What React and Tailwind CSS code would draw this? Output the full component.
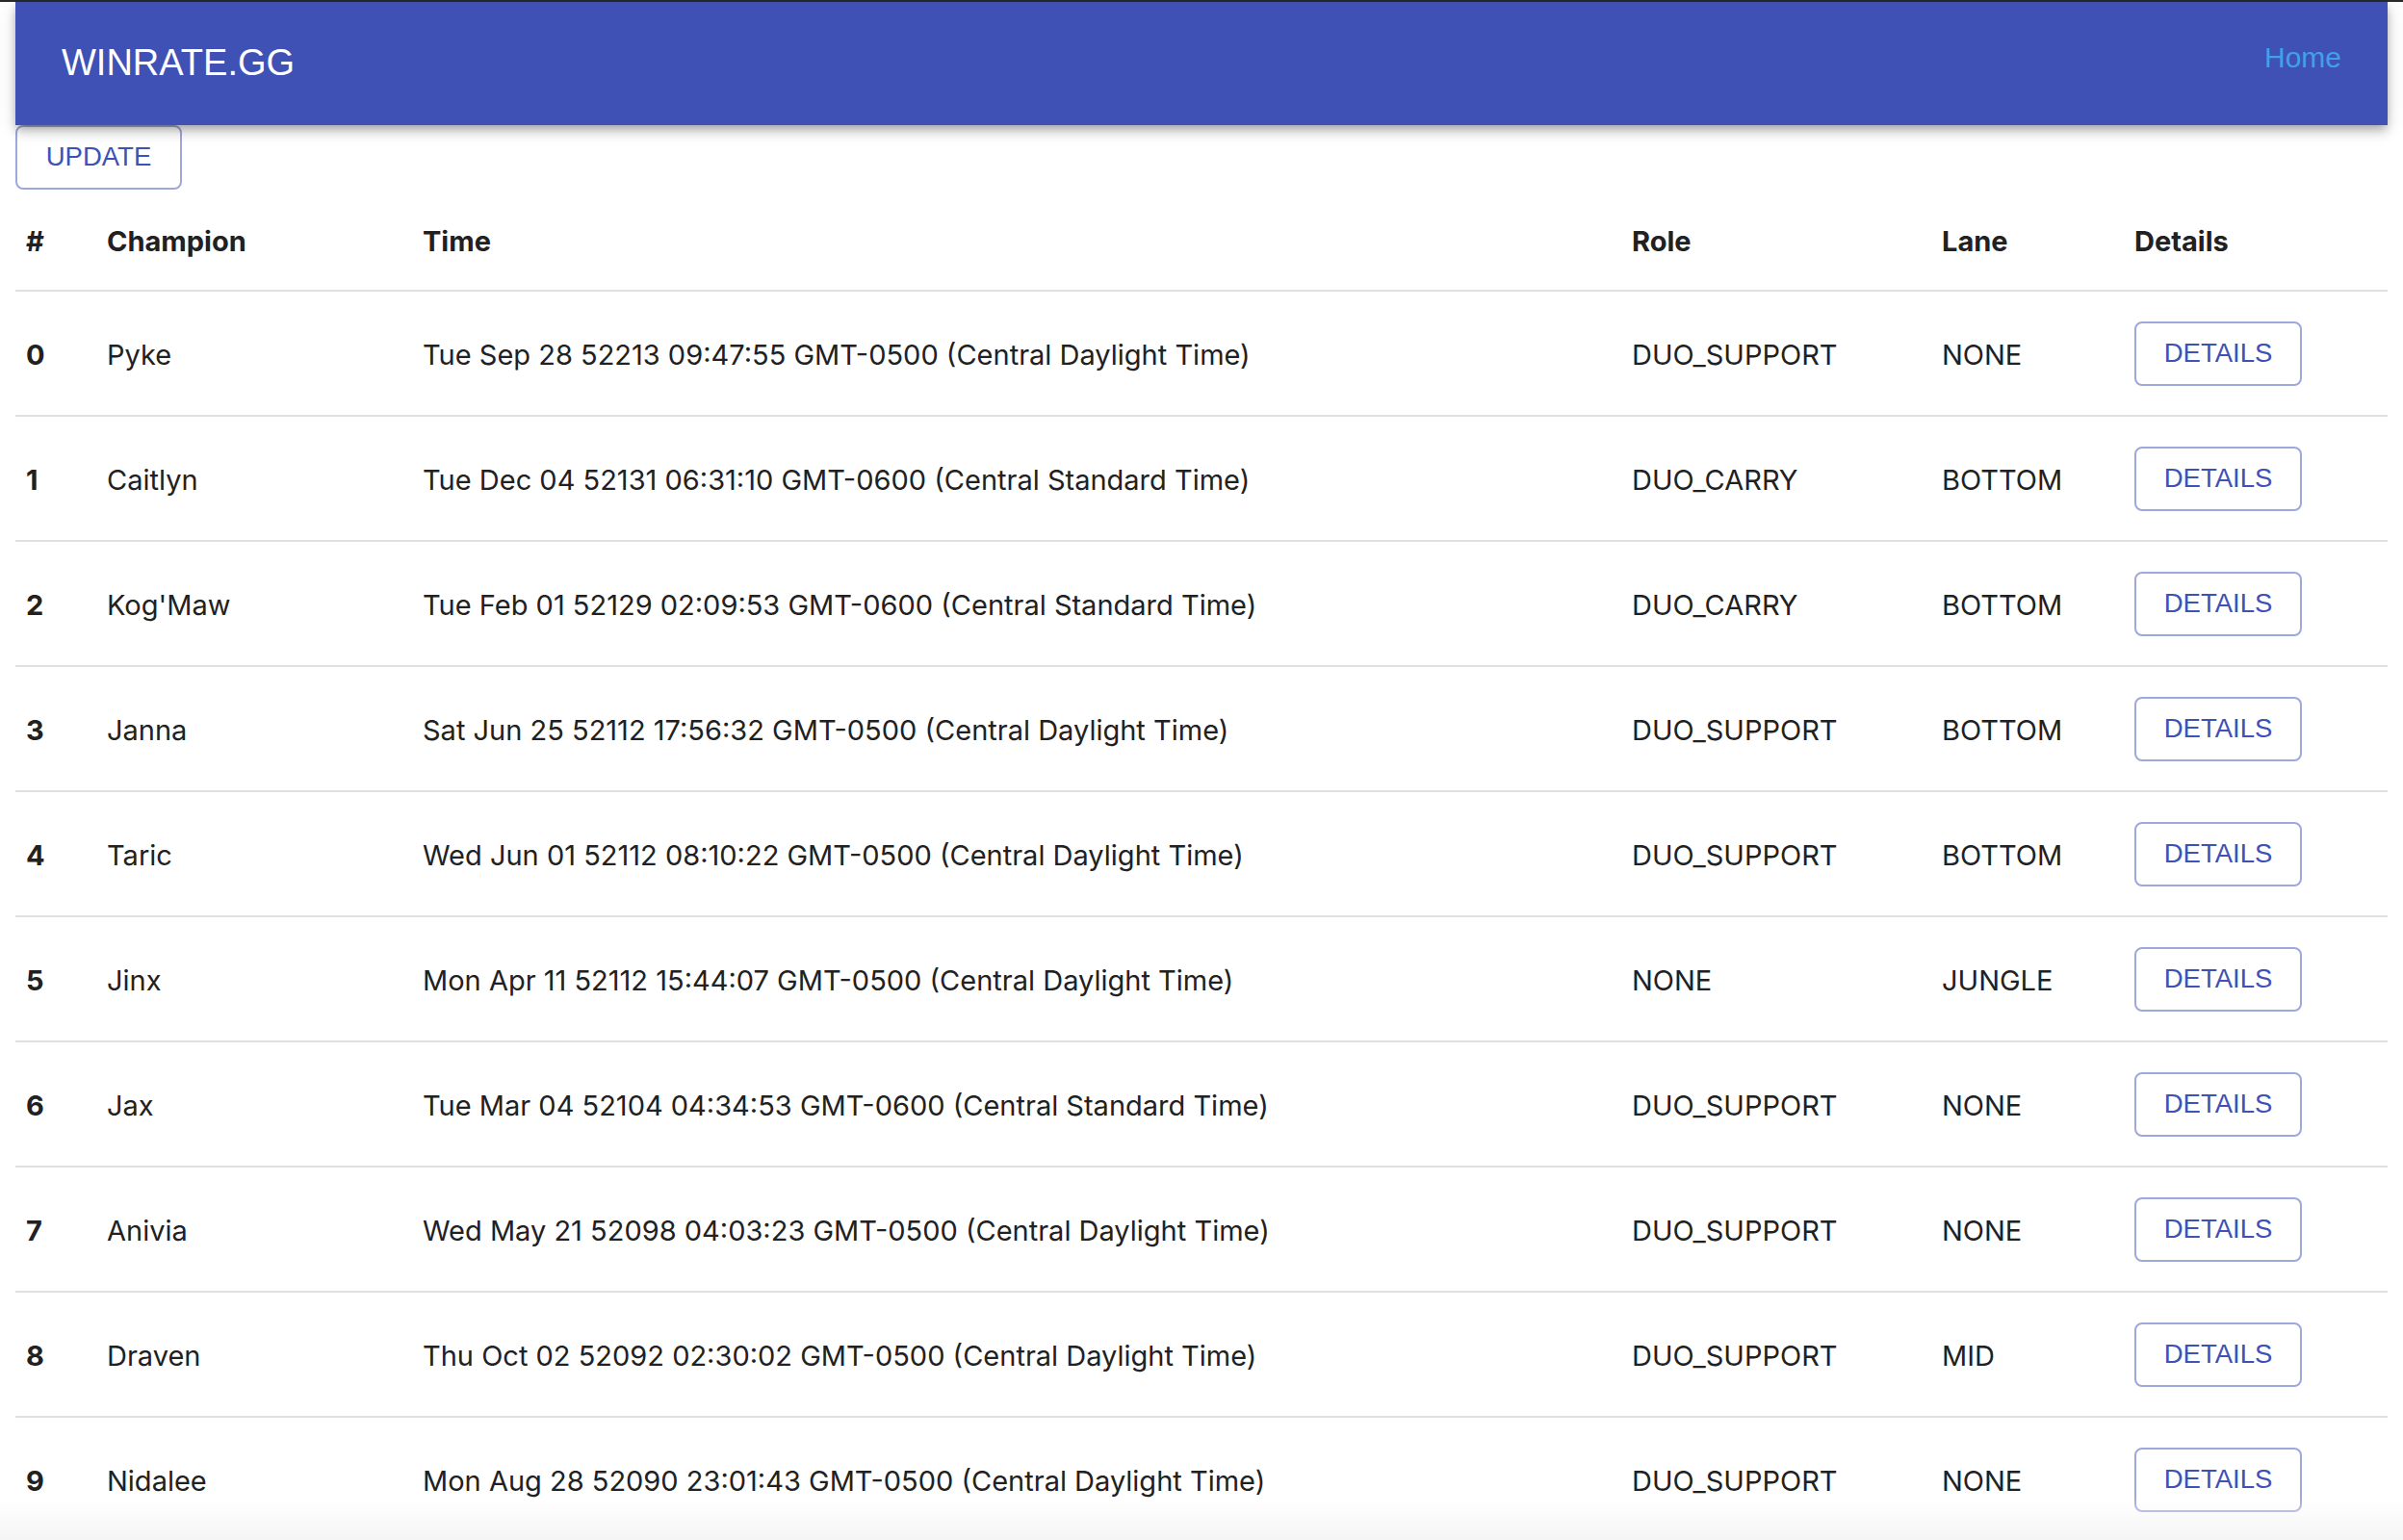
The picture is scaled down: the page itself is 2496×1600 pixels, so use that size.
import React from "react";

const rows = [
  ["0", "Pyke", "Tue Sep 28 52213 09:47:55 GMT-0500 (Central Daylight Time)", "DUO_SUPPORT", "NONE"],
  ["1", "Caitlyn", "Tue Dec 04 52131 06:31:10 GMT-0600 (Central Standard Time)", "DUO_CARRY", "BOTTOM"],
  ["2", "Kog'Maw", "Tue Feb 01 52129 02:09:53 GMT-0600 (Central Standard Time)", "DUO_CARRY", "BOTTOM"],
  ["3", "Janna", "Sat Jun 25 52112 17:56:32 GMT-0500 (Central Daylight Time)", "DUO_SUPPORT", "BOTTOM"],
  ["4", "Taric", "Wed Jun 01 52112 08:10:22 GMT-0500 (Central Daylight Time)", "DUO_SUPPORT", "BOTTOM"],
  ["5", "Jinx", "Mon Apr 11 52112 15:44:07 GMT-0500 (Central Daylight Time)", "NONE", "JUNGLE"],
  ["6", "Jax", "Tue Mar 04 52104 04:34:53 GMT-0600 (Central Standard Time)", "DUO_SUPPORT", "NONE"],
  ["7", "Anivia", "Wed May 21 52098 04:03:23 GMT-0500 (Central Daylight Time)", "DUO_SUPPORT", "NONE"],
  ["8", "Draven", "Thu Oct 02 52092 02:30:02 GMT-0500 (Central Daylight Time)", "DUO_SUPPORT", "MID"],
  ["9", "Nidalee", "Mon Aug 28 52090 23:01:43 GMT-0500 (Central Daylight Time)", "DUO_SUPPORT", "NONE"],
];

const grid = "grid grid-cols-[84px_328px_1256px_322px_200px_1fr]";
const cell = "pl-[11px] flex items-center";

function OutlinedButton({ children, className = "" }) {
  return (
    <button
      className={
        "flex items-center justify-center border-2 border-[#9fa8da] rounded-[8px] bg-white text-[#3f51b5] text-[27.5px] leading-none font-['Liberation_Sans',Arial,sans-serif] " +
        className
      }
    >
      {children}
    </button>
  );
}

export default function App() {
  return (
    <div className="relative min-h-[1600px] h-[1600px] overflow-hidden bg-white font-['Inter',sans-serif] text-[#212121]">
      <div className="h-[2px] w-full bg-[#2a2a2a]" />
      <div className="px-[16px]">
        <header className="relative z-10 h-[128px] bg-[#3f51b5] flex items-center justify-between px-[48px] shadow-[0px_4px_8px_-2px_rgba(0,0,0,0.2),0px_8px_10px_0px_rgba(0,0,0,0.14),0px_2px_20px_0px_rgba(0,0,0,0.12)] font-['Liberation_Sans',Arial,sans-serif]">
          <div className="text-white text-[38px] leading-none mb-[3px]">WINRATE.GG</div>
          <a className="text-[#42a0e8] text-[30px] leading-none mb-[12px]">Home</a>
        </header>
        <OutlinedButton className="w-[173px] h-[67px] pb-[2px]">UPDATE</OutlinedButton>

        <div className="text-[29px] leading-none">
          <div className={grid + " h-[106px] border-b-2 border-[#e0e0e0] font-bold pt-[3px]"}>
            <div className={cell}>#</div>
            <div className={cell}>Champion</div>
            <div className={cell}>Time</div>
            <div className={cell}>Role</div>
            <div className={cell}>Lane</div>
            <div className={cell}>Details</div>
          </div>
          {rows.map((r) => (
            <div key={r[0]} className={grid + " h-[130px] border-b-2 border-[#e0e0e0]"}>
              <div className={cell + " font-bold pt-[3px]"}>{r[0]}</div>
              <div className={cell + " pt-[3px]"}>{r[1]}</div>
              <div className={cell + " pt-[3px]"}>{r[2]}</div>
              <div className={cell + " pt-[3px]"}>{r[3]}</div>
              <div className={cell + " pt-[3px]"}>{r[4]}</div>
              <div className={cell}>
                <OutlinedButton className="w-[174px] h-[67px]">DETAILS</OutlinedButton>
              </div>
            </div>
          ))}
        </div>
      </div>
      <div className="pointer-events-none absolute bottom-0 left-0 right-0 h-[44px] bg-gradient-to-b from-[rgba(245,245,245,0)] to-[#f5f5f5]" />
    </div>
  );
}
